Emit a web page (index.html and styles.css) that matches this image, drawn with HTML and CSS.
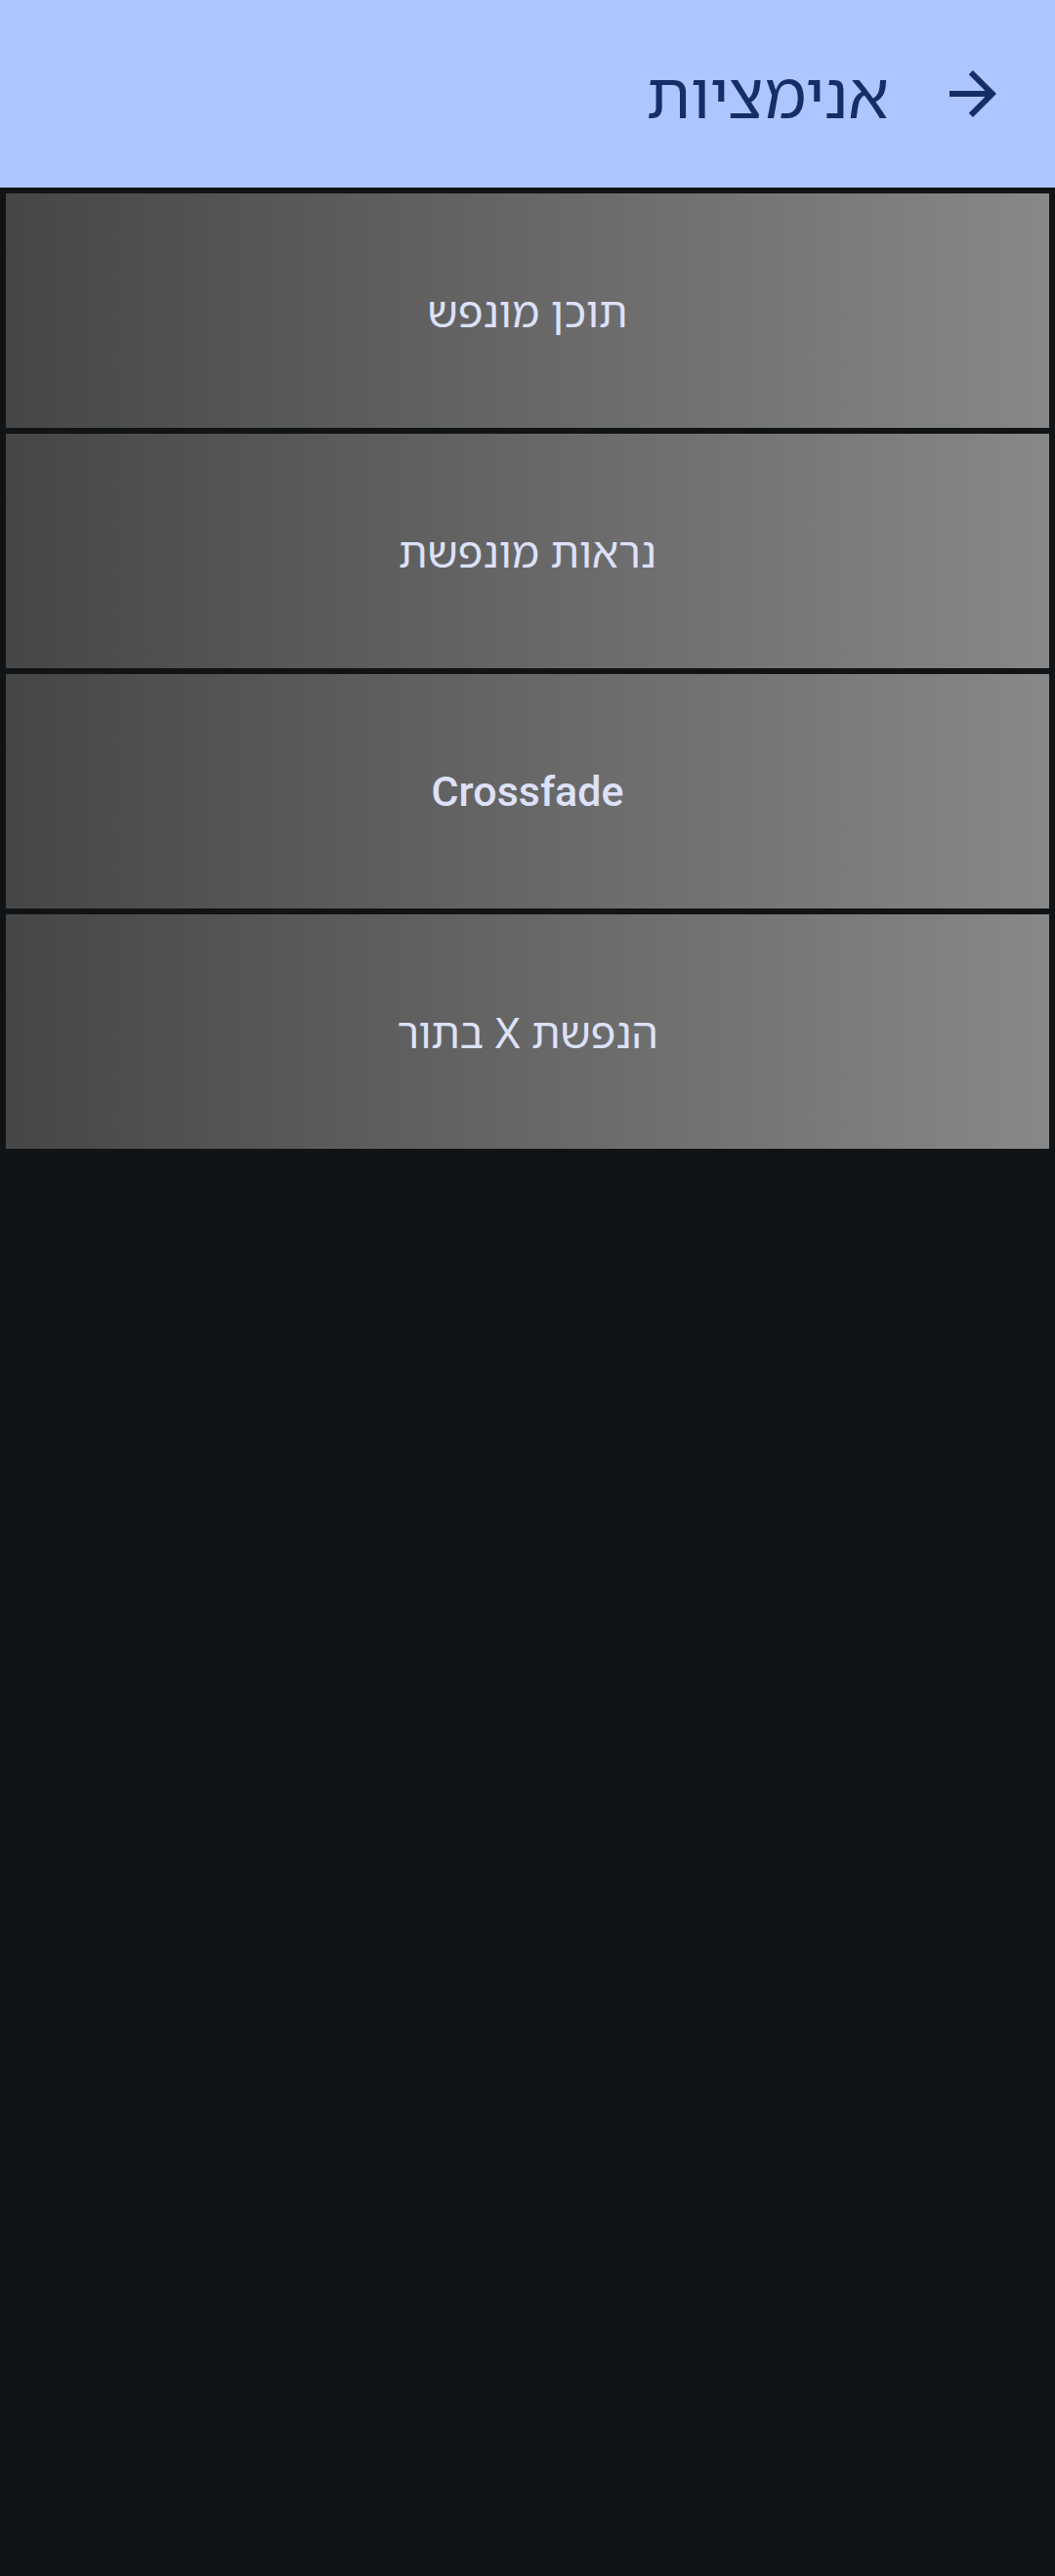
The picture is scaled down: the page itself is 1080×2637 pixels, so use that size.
FILE: index.html
```html
<!DOCTYPE html>
<html lang="he" dir="rtl">
<head>
<meta charset="utf-8">
<title>אנימציות</title>
<link rel="stylesheet" href="styles.css">
</head>
<body>
<div class="screen">
  <header class="appbar">
    <button class="nav" aria-label="חזרה">
      <svg viewBox="0 0 24 24" width="72" height="72" aria-hidden="true">
        <path d="M4 11h12.17l-5.59-5.59L12 4l8 8-8 8-1.41-1.41L16.17 13H4z" fill="currentColor"/>
      </svg>
    </button>
    <h1 class="title">אנימציות</h1>
  </header>
  <main class="list">
    <div class="card"><span class="label">תוכן מונפש</span></div>
    <div class="card"><span class="label">נראות מונפשת</span></div>
    <div class="card"><span class="label latin">Crossfade</span></div>
    <div class="card"><span class="label">הנפשת X בתור</span></div>
  </main>
</div>
</body>
</html>
```
FILE: styles.css
```css
html, body {
  margin: 0;
  padding: 0;
}
body {
  background: #111416;
  width: 1080px;
  min-height: 2637px;
  font-family: Roboto, "Noto Sans Hebrew", "Noto Sans", "DejaVu Sans", sans-serif;
}
.screen {
  display: flex;
  flex-direction: column;
}
.appbar {
  height: 192px;
  background: #adc6ff;
  display: flex;
  align-items: center;
  padding-right: 48px;
  color: #142f68;
}
.nav {
  width: 72px;
  height: 72px;
  padding: 0;
  border: 0;
  background: none;
  color: #142f68;
  display: flex;
}
.title {
  margin: 0 50px 0 0;
  font-family: "Noto Sans Hebrew", "Noto Sans", "DejaVu Sans", sans-serif;
  font-weight: 400;
  font-size: 66px;
  line-height: 1;
}
.list {
  display: flex;
  flex-direction: column;
  gap: 6px;
  padding: 6px;
}
.card {
  height: 240px;
  background: linear-gradient(to right, #464646, #888888);
  display: flex;
  align-items: center;
  justify-content: center;
}
.label {
  color: #dde1f9;
  font-size: 43px;
  font-weight: 400;
  font-family: "Noto Sans Hebrew", "Noto Sans", "DejaVu Sans", sans-serif;
}
.label.latin {
  font-family: Roboto, sans-serif;
  font-weight: 500;
}
```
